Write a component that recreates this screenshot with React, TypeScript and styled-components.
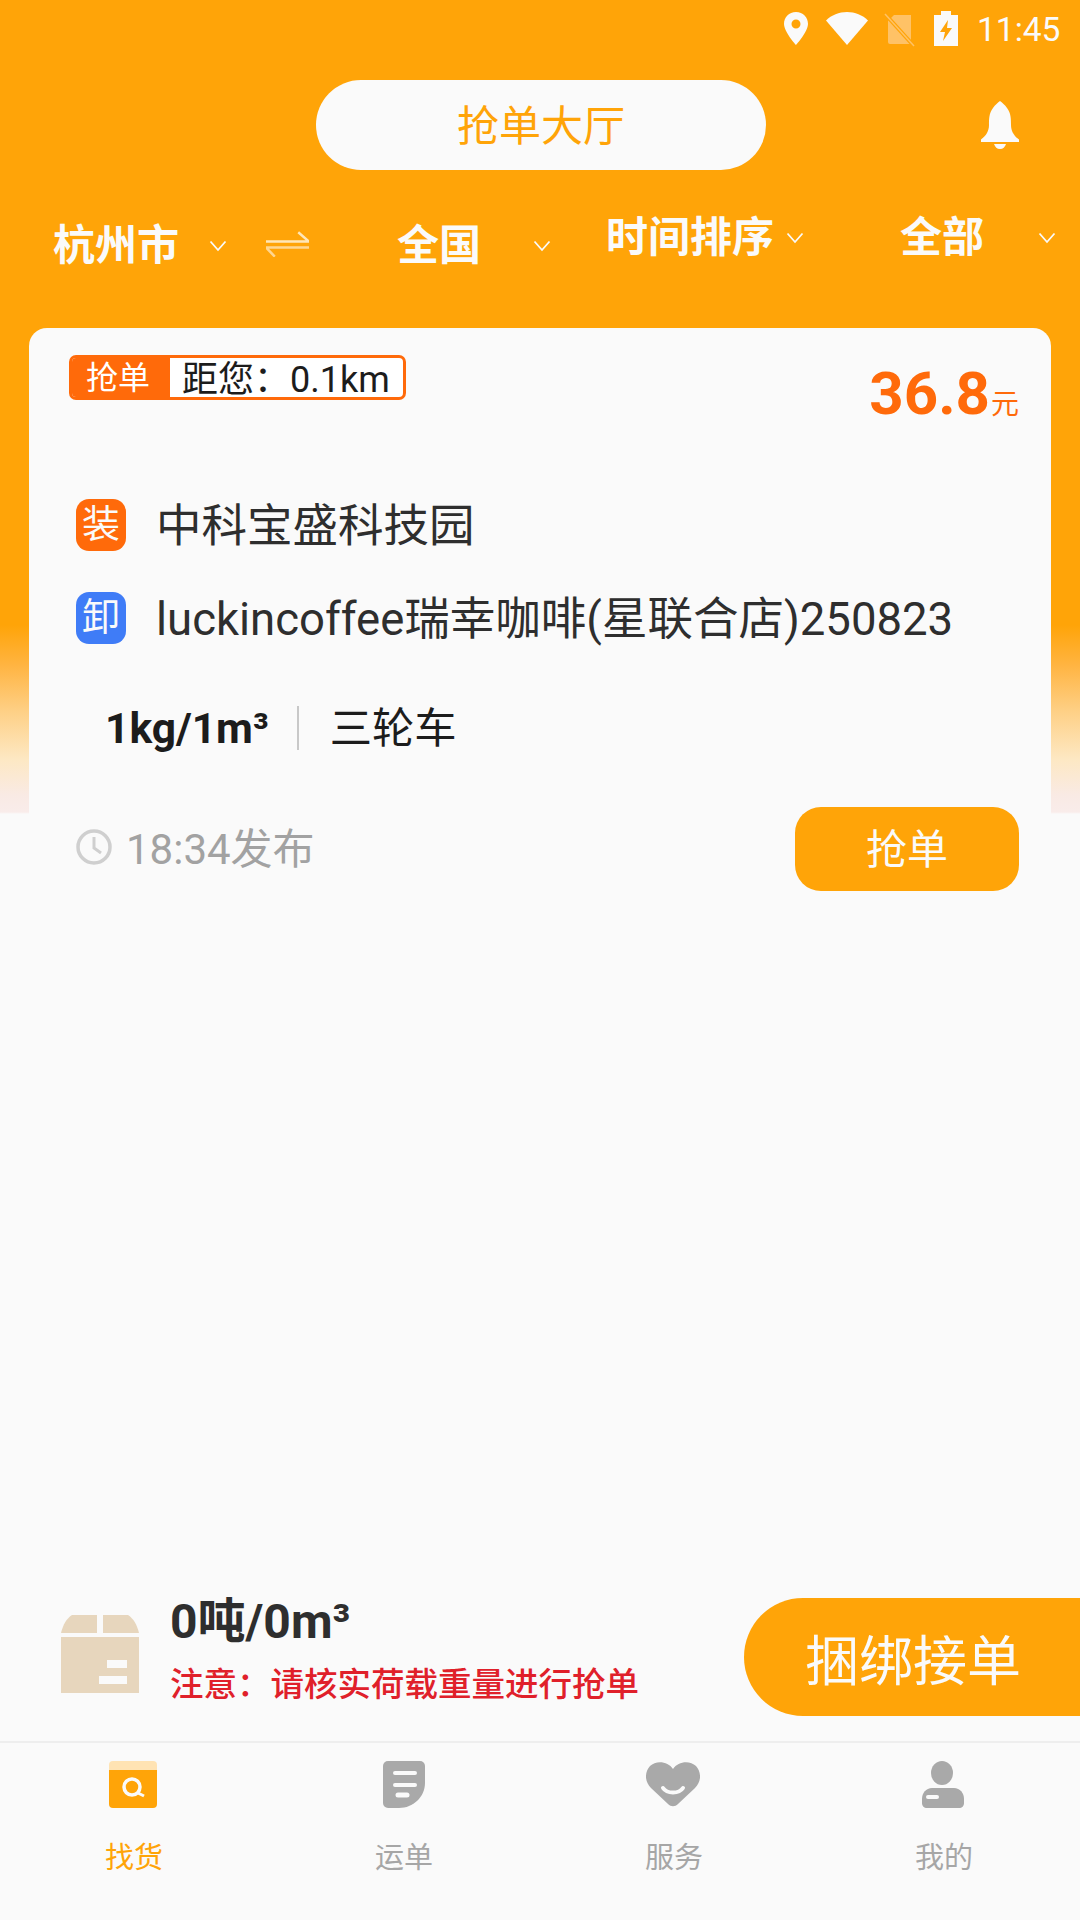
import React from "react";
import styled, { createGlobalStyle } from "styled-components";

const Global = createGlobalStyle`
  html, body { margin: 0; padding: 0; background: #fafafa; }
  * { box-sizing: border-box; }
  body { font-family: Roboto, "Noto Sans CJK SC", sans-serif; }
`;

const Page = styled.div`
  width: 1080px;
  height: 1920px;
  display: flex;
  flex-direction: column;
  overflow: hidden;
  background: linear-gradient(
    #ffa408 0,
    #ffa408 625px,
    #ffb441 665px,
    #fecf84 710px,
    #fde8c4 760px,
    #f9eae4 795px,
    #f9ecea 812px,
    #fafafa 814px
  );
`;

const StatusBar = styled.div`
  height: 60px;
  display: flex;
  align-items: flex-start;
  padding-left: 783px;
  padding-top: 11px;
`;
const StatusIcon = styled.svg<{ $ml?: number }>`
  display: block;
  margin-left: ${(p) => p.$ml ?? 0}px;
  flex: none;
`;
const Clock = styled.span`
  margin-left: 19px;
  margin-top: 1px;
  font-size: 33.5px;
  line-height: 36px;
  color: #fafafa;
`;

const TitleRow = styled.div`
  margin-top: 20px;
  height: 90px;
  padding-left: 316px;
  display: flex;
  align-items: center;
`;
const TitlePill = styled.div`
  width: 450px;
  height: 90px;
  border-radius: 45px;
  background: #fafafa;
  color: #ffa408;
  font-size: 42px;
  padding-bottom: 6px;
  display: flex;
  align-items: center;
  justify-content: center;
`;
const BellIcon = styled.svg`
  margin-left: 214px;
  display: block;
`;

const Filters = styled.div`
  margin-top: 48px;
  height: 46px;
  padding-left: 53px;
  display: flex;
  align-items: flex-start;
`;
const Filter = styled.div<{ $ml: number; $low?: boolean }>`
  margin-left: ${(p) => p.$ml}px;
  margin-top: ${(p) => (p.$low ? 8 : 0)}px;
  display: flex;
  align-items: center;
  height: 40px;
`;
const FilterText = styled.span`
  color: #fafafa;
  font-size: 42px;
  line-height: 40px;
  font-weight: 700;
  white-space: nowrap;
`;
const Chevron = styled.svg<{ $ml: number }>`
  margin-left: ${(p) => p.$ml}px;
  display: block;
  flex: none;
`;
const SwapIcon = styled.svg`
  margin-left: 39px;
  margin-top: 13px;
  display: block;
  flex: none;
`;

const Card = styled.div`
  margin: 64px 29px 0;
  height: 592px;
  border-radius: 18px 18px 0 0;
  background: #fafafa;
  padding: 27px 32px 0 40px;
  display: flex;
  flex-direction: column;
`;
const CardTop = styled.div`
  display: flex;
  justify-content: space-between;
  align-items: flex-start;
  height: 116px;
`;
const Badge = styled.div`
  width: 337px;
  height: 45px;
  border: 3px solid #ff6a0a;
  border-radius: 7px;
  display: flex;
  align-items: stretch;
  overflow: hidden;
  background: #fff;
`;
const BadgeTag = styled.span`
  width: 98px;
  padding: 2px 6px 0 0;
  background: #ff6a0a;
  color: #fff;
  font-size: 32px;
  line-height: 36px;
  text-align: center;
`;
const BadgeText = styled.span`
  padding: 2px 0 0 12px;
  color: #1c1c1c;
  font-size: 36px;
  line-height: 40px;
  white-space: nowrap;
`;
const Price = styled.div`
  margin-top: 4px;
  color: #ff6a0a;
  font-weight: 700;
  font-size: 60px;
  line-height: 70px;
  white-space: nowrap;
  small {
    font-size: 28px;
    font-weight: 400;
    margin-left: 1px;
  }
`;
const Place = styled.div<{ $mt: number }>`
  margin-top: ${(p) => p.$mt}px;
  margin-left: 7px;
  display: flex;
  align-items: flex-start;
  height: 52px;
`;
const PlaceTag = styled.span<{ $bg: string }>`
  width: 50px;
  height: 52px;
  border-radius: 13px;
  background: ${(p) => p.$bg};
  color: #fafafa;
  font-size: 38px;
  line-height: 50px;
  text-align: center;
  flex: none;
`;
const PlaceText = styled.span`
  margin: 2px 0 0 30px;
  color: #2e2e2e;
  font-size: 45.5px;
  line-height: 52px;
  white-space: nowrap;
`;
const Spec = styled.div`
  margin-top: 62px;
  margin-left: 36px;
  display: flex;
  align-items: center;
  height: 44px;
  color: #1c1c1c;
`;
const SpecWeight = styled.span`
  font-size: 42.5px;
  font-weight: 700;
  white-space: nowrap;
`;
const SpecDivider = styled.span`
  width: 2px;
  height: 44px;
  background: #c8c8c8;
  margin: 0 31px 0 28px;
`;
const SpecCar = styled.span`
  font-size: 42.3px;
  padding-bottom: 8px;
  white-space: nowrap;
`;
const BottomLine = styled.div`
  margin-top: 57px;
  margin-left: 7px;
  display: flex;
  align-items: center;
  justify-content: space-between;
  height: 84px;
`;
const Published = styled.div`
  display: flex;
  align-items: center;
  color: #a2a2a2;
  font-size: 42px;
  gap: 14px;
  padding-bottom: 8px;
  svg {
    margin-top: 4px;
  }
`;
const GrabButton = styled.div`
  width: 224px;
  height: 84px;
  border-radius: 26px;
  background: #ffa408;
  color: #fafafa;
  font-size: 41px;
  padding-bottom: 6px;
  display: flex;
  align-items: center;
  justify-content: center;
`;

const Spacer = styled.div`
  flex: 1;
`;

const Summary = styled.div`
  height: 143px;
  display: flex;
  align-items: flex-start;
  padding-left: 61px;
`;
const BoxIcon = styled.svg`
  margin-top: 17px;
  display: block;
  flex: none;
`;
const SummaryText = styled.div`
  margin-left: 31px;
  display: flex;
  flex-direction: column;
`;
const Load = styled.div`
  font-size: 48px;
  font-weight: 700;
  line-height: 48px;
  color: #2e2e2e;
  white-space: nowrap;
`;
const Warning = styled.div`
  margin-top: 16px;
  font-size: 33.5px;
  font-weight: 500;
  line-height: 46px;
  color: #e0202a;
  white-space: nowrap;
`;
const BindButton = styled.div`
  margin-left: auto;
  width: 336px;
  height: 118px;
  border-radius: 59px 0 0 59px;
  background: #ffa408;
  color: #fafafa;
  font-size: 54px;
  padding-left: 61px;
  display: flex;
  align-items: center;
`;

const TabBar = styled.nav`
  height: 179px;
  border-top: 2px solid #eeeeee;
  display: grid;
  grid-template-columns: repeat(4, 270px);
`;
const Tab = styled.div<{ $active?: boolean }>`
  display: flex;
  flex-direction: column;
  align-items: center;
  padding: 18px 2px 0 0;
  color: ${(p) => (p.$active ? "#ffa408" : "#a6a6a6")};
  font-size: 29px;
  line-height: 36px;
`;
const TabIcon = styled.svg<{ $mr?: number }>`
  display: block;
  margin: 0 ${(p) => p.$mr ?? 0}px 31px 0;
`;

const ChevronGlyph = ({ ml }: { ml: number }) => (
  <Chevron $ml={ml} width="18" height="12" viewBox="0 0 18 12">
    <path d="M1.5 1.5 L9 10 L16.5 1.5" fill="none" stroke="#fafafa" strokeWidth="1.8" />
  </Chevron>
);

export default function App() {
  return (
    <Page>
      <Global />
      <StatusBar>
        <StatusIcon width="26" height="34" viewBox="0 0 26 34">
          <path
            fillRule="evenodd"
            d="M13 1C6 1 1 6.2 1 12.8 1 21 13 34 13 34S25 21 25 12.8C25 6.2 20 1 13 1ZM13 8.5a4.500 4.500 0 1 1 0 9 4.500 4.500 0 0 1 0-9Z"
            fill="#fafafa"
          />
        </StatusIcon>
        <StatusIcon $ml={17} width="42" height="34" viewBox="0 0 42 34">
          <path d="M0 9.500C5.500 4 13 1 21 1S36.500 4 42 9.500L21 34Z" fill="#fafafa" />
        </StatusIcon>
        <StatusIcon $ml={16} width="31" height="36" viewBox="0 0 31 36">
          <path d="M10 4H27V31a2 2 0 0 1-2 2H6a2 2 0 0 1-2-2V10Z" fill="#ffc266" />
          <path d="M1 3L30 35" stroke="#ffa408" strokeWidth="4" />
          <path d="M1 3L30 35" stroke="#ffc266" strokeWidth="1.500" />
        </StatusIcon>
        <StatusIcon $ml={19} width="24" height="35" viewBox="0 0 24 35">
          <path
            fillRule="evenodd"
            d="M7 0H17V4H24V35H0V4H7ZM14 9L6 21H11L9 30L18 17H13Z"
            fill="#fafafa"
          />
        </StatusIcon>
        <Clock>11:45</Clock>
      </StatusBar>

      <TitleRow>
        <TitlePill>抢单大厅</TitlePill>
        <BellIcon width="40" height="48" viewBox="0 0 40 48">
          <path
            d="M20 0c2 1.500 5 4 7 7 4 5 4 11 4 17 0 6 3 11 8 14.500V41H1v-2.500C6 35 9 30 9 24c0-6 0-12 4-17 2-3 5-5.500 7-7Z"
            fill="#fafafa"
          />
          <path d="M14 43h12c-1 3-3 5-6 5s-5-2-6-5Z" fill="#fafafa" />
        </BellIcon>
      </TitleRow>

      <Filters>
        <Filter $ml={0} $low>
          <FilterText>杭州市</FilterText>
          <ChevronGlyph ml={30} />
        </Filter>
        <SwapIcon width="43" height="26" viewBox="0 0 44 26">
          <path d="M0 10.500H44L33 1" fill="none" stroke="#ffe6b8" strokeWidth="2.500" />
          <path d="M44 16.500H0L9 26" fill="none" stroke="#ffd691" strokeWidth="2.500" />
        </SwapIcon>
        <Filter $ml={88} $low>
          <FilterText>全国</FilterText>
          <ChevronGlyph ml={52} />
        </Filter>
        <Filter $ml={55}>
          <FilterText>时间排序</FilterText>
          <ChevronGlyph ml={12} />
        </Filter>
        <Filter $ml={96}>
          <FilterText>全部</FilterText>
          <ChevronGlyph ml={54} />
        </Filter>
      </Filters>

      <Card>
        <CardTop>
          <Badge>
            <BadgeTag>抢单</BadgeTag>
            <BadgeText>距您：0.1km</BadgeText>
          </Badge>
          <Price>
            36.8<small>元</small>
          </Price>
        </CardTop>
        <Place $mt={28}>
          <PlaceTag $bg="#ff6a0a">装</PlaceTag>
          <PlaceText>中科宝盛科技园</PlaceText>
        </Place>
        <Place $mt={41}>
          <PlaceTag $bg="#3f7cf7">卸</PlaceTag>
          <PlaceText>luckincoffee瑞幸咖啡(星联合店)250823</PlaceText>
        </Place>
        <Spec>
          <SpecWeight>1kg/1m³</SpecWeight>
          <SpecDivider />
          <SpecCar>三轮车</SpecCar>
        </Spec>
        <BottomLine>
          <Published>
            <svg width="36" height="36" viewBox="0 0 36 36">
              <circle cx="18" cy="18" r="16" fill="none" stroke="#cfcfcf" strokeWidth="3.500" />
              <path d="M18 8V19L25 24" fill="none" stroke="#cfcfcf" strokeWidth="3" />
            </svg>
            18:34发布
          </Published>
          <GrabButton>抢单</GrabButton>
        </BottomLine>
      </Card>

      <Spacer />

      <Summary>
        <BoxIcon width="78" height="78" viewBox="0 0 78 78">
          <path d="M11 0H36V18H0C2 10 5 4 11 0Z" fill="#e7d6bd" />
          <path d="M42 0H67C73 4 76 10 78 18H42Z" fill="#e7d6bd" />
          <path d="M0 22H78V78H0Z" fill="#e7d6bd" />
          <path d="M46 45H66V53H46ZM38 61H66V69H38Z" fill="#fafafa" />
        </BoxIcon>
        <SummaryText>
          <Load>0吨/0m³</Load>
          <Warning>注意：请核实荷载重量进行抢单</Warning>
        </SummaryText>
        <BindButton>捆绑接单</BindButton>
      </Summary>

      <TabBar>
        <Tab $active>
          <TabIcon $mr={2} width="48" height="48" viewBox="0 0 48 48">
            <path d="M4 0H44a4 4 0 0 1 4 4V9H0V4a4 4 0 0 1 4-4Z" fill="#ffe3b3" />
            <path d="M0 9H48V43a4 4 0 0 1-4 4H4a4 4 0 0 1-4-4Z" fill="#ffa408" />
            <circle cx="23" cy="26" r="8" fill="none" stroke="#fafafa" strokeWidth="3.500" />
            <path d="M29 32L35 35" stroke="#fafafa" strokeWidth="3" />
          </TabIcon>
          找货
        </Tab>
        <Tab>
          <TabIcon width="42" height="48" viewBox="0 0 42 48">
            <path
              d="M5 0H37a5 5 0 0 1 5 5V22C42 36 30 47 16 47H5a5 5 0 0 1-5-5V5a5 5 0 0 1 5-5Z"
              fill="#a9a9a9"
            />
            <path d="M12 12H32M12 24H32" stroke="#fafafa" strokeWidth="4" strokeLinecap="round" />
            <path d="M15 34H24" stroke="#fafafa" strokeWidth="5" strokeLinecap="round" />
          </TabIcon>
          运单
        </Tab>
        <Tab>
          <TabIcon $mr={3} width="54" height="48" viewBox="0 0 54 48">
            <path
              d="M27 8C22 0 10-1 4 5-2 12-1 21 5 27L22 43C25 46 29 46 32 43L49 27C55 21 56 12 50 5 44-1 32 0 27 8Z"
              fill="#a9a9a9"
            />
            <path d="M17 27C21 33 33 33 37 27" fill="none" stroke="#fafafa" strokeWidth="4" strokeLinecap="round" />
          </TabIcon>
          服务
        </Tab>
        <Tab>
          <TabIcon $mr={2} width="42" height="48" viewBox="0 0 42 48">
            <ellipse cx="20" cy="12" rx="11" ry="12" fill="#a9a9a9" />
            <path
              d="M10 27H32C38 27 42 32 42 38V42C42 45 40 47 37 47H5C2 47 0 45 0 42V38C0 32 4 27 10 27Z"
              fill="#a9a9a9"
            />
            <path d="M6 36H15" stroke="#fafafa" strokeWidth="4" strokeLinecap="round" />
          </TabIcon>
          我的
        </Tab>
      </TabBar>
    </Page>
  );
}
